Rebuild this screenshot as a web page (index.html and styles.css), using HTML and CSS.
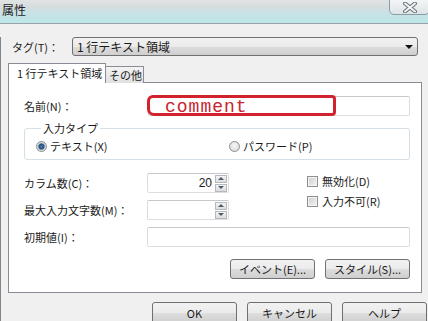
FILE: index.html
```html
<!DOCTYPE html>
<html>
<head>
<meta charset="utf-8">
<link rel="stylesheet" href="styles.css">
</head>
<body>
<div class="titlebar">
  <span class="title">属性</span>
  <span class="close">
    <svg width="16" height="11" viewBox="0 0 16 11">
      <path d="M3 1.5 L13 9.5 M13 1.5 L3 9.5" stroke="#6a7378" stroke-width="4" stroke-linecap="round"/>
      <path d="M3 1.5 L13 9.5 M13 1.5 L3 9.5" stroke="#f4f6f7" stroke-width="2" stroke-linecap="round"/>
    </svg>
  </span>
</div>
<div class="client">
  <div class="tag-row">
    <label class="tag-label">タグ(T)：</label>
    <div class="select"><span>1 行テキスト領域</span><span class="arrow"></span></div>
  </div>

  <div class="tabs">
    <div class="tab active">1 行テキスト領域</div>
    <div class="tab">その他</div>
  </div>

  <div class="panel">
    <div class="name-row">
      <label>名前(N)：</label>
      <div class="field"></div>
      <div class="scribble">comment</div>
    </div>

    <fieldset class="group">
      <legend>入力タイプ</legend>
      <div class="radios">
        <span class="option"><span class="radio checked"></span>テキスト(X)</span>
        <span class="option"><span class="radio"></span>パスワード(P)</span>
      </div>
    </fieldset>

    <div class="form-grid">
      <label class="lbl">カラム数(C)：</label>
      <div class="spin"><span class="value">20</span><span class="spin-btns"><span class="up"></span><span class="down"></span></span></div>
      <div class="checks">
        <span class="option"><span class="check"></span>無効化(D)</span>
        <span class="option"><span class="check"></span>入力不可(R)</span>
      </div>
      <label class="lbl">最大入力文字数(M)：</label>
      <div class="spin"><span class="value"></span><span class="spin-btns"><span class="up"></span><span class="down"></span></span></div>
      <label class="lbl">初期値(I)：</label>
      <div class="field wide"></div>
    </div>

    <div class="panel-buttons">
      <button class="btn">イベント(E)...</button>
      <button class="btn">スタイル(S)...</button>
    </div>
  </div>

  <div class="footer">
    <button class="btn">OK</button>
    <button class="btn">キャンセル</button>
    <button class="btn">ヘルプ</button>
  </div>
</div>
</body>
</html>
```

FILE: styles.css
```css
* {
  box-sizing: border-box;
}

body {
  margin: 0;
  width: 428px;
  height: 321px;
  overflow: hidden;
  background-color: #f0f0f0;
  font: 11px/14px "Noto Sans CJK JP", "Liberation Sans", sans-serif;
  color: #1a1a1a;
  white-space: nowrap;
}

.titlebar {
  height: 24px;
  display: flex;
  justify-content: space-between;
  align-items: flex-start;
  background: linear-gradient(to bottom, #e1e4e5 0%, #d6dcdd 30%, #c6e3e6 60%, #bfe6e9 100%);
  border-bottom: 1px solid #98a3a8;
}

.title {
  padding: 3px 0 0 2px;
  font-size: 12px;
  color: #222;
}

.close {
  width: 41px;
  height: 16px;
  margin: -1px -2px 0 0;
  display: flex;
  align-items: center;
  justify-content: center;
  border: 1px solid #8d9ba5;
  border-radius: 0 0 5px 5px;
  background: linear-gradient(to bottom, #f3f5f6, #dde4e7);
}

.client {
  border-left: 1px solid #7f868a;
  padding: 0 6px 0 7px;
}

.tag-row {
  display: flex;
  align-items: center;
  margin-top: 13px;
  padding: 0 4px;
}

.tag-label {
  width: 60px;
}

.select {
  flex: 1;
  height: 19px;
  display: flex;
  align-items: center;
  justify-content: space-between;
  padding-left: 4px;
  border: 1px solid #707070;
  border-radius: 3px;
  background: linear-gradient(to bottom, #f2f2f2 0%, #ebebeb 50%, #dddddd 51%, #cfcfcf 100%);
  font-size: 12px;
}

.arrow {
  margin-right: 4px;
  border-left: 4px solid transparent;
  border-right: 4px solid transparent;
  border-top: 4px solid #111;
}

.tabs {
  display: flex;
  align-items: flex-end;
  height: 20px;
  margin-top: 7px;
}

.tab {
  height: 17px;
  width: 38px;
  padding-left: 3px;
  border: 1px solid #898c95;
  border-left: none;
  border-bottom: none;
  background: linear-gradient(to bottom, #f3f3f3, #e0e0e0);
  line-height: 16px;
  overflow: hidden;
}

.tab.active {
  height: 20px;
  width: 98px;
  padding-left: 8px;
  border-left: 1px solid #898c95;
  background: white;
  position: relative;
  z-index: 1;
  line-height: 18px;
}

.panel {
  margin-top: -1px;
  height: 211px;
  border: 1px solid #898c95;
  background-color: white;
  padding: 13px 11px 0 15px;
}

.name-row {
  display: flex;
  align-items: center;
  position: relative;
}

.name-row label {
  width: 124px;
}

.field {
  flex: 1;
  height: 20px;
  border: 1px solid #dadde1;
  border-top-color: #c4c7cc;
  border-radius: 2px;
}

.scribble {
  position: absolute;
  left: 123px;
  top: -1px;
  width: 189px;
  height: 21px;
  border: 3px solid #d1222e;
  border-radius: 6px 4px 4px 7px;
  padding: 2px 0 0 15px;
  font: 18px/14px "Liberation Mono", monospace;
  letter-spacing: 1px;
  color: #c8242f;
}

.group {
  margin: 5px 0 0 0;
  padding: 4px 0 6px 11px;
  border: 1px solid #d5dfe5;
  border-radius: 3px;
}

.group legend {
  margin-left: 5px;
  padding: 0 2px;
}

.radios {
  display: grid;
  grid-template-columns: 193px 1fr;
}

.option {
  display: flex;
  align-items: center;
}

.radio {
  width: 11px;
  height: 11px;
  margin-right: 3px;
  border: 1px solid #8b8d8f;
  border-radius: 50%;
  background: radial-gradient(circle at 50% 40%, #f8f8f8, #d3d3d3);
}

.radio.checked {
  background: radial-gradient(circle, #4d84b5 0, #1f4c78 2.5px, #bcc7d0 3.5px, #eef1f3 5px);
}

.form-grid {
  display: grid;
  grid-template-columns: 123px 82px 78px 1fr;
  grid-template-rows: 20px 20px 20px;
  row-gap: 7px;
  margin-top: 13px;
  align-items: center;
}

.lbl {
  grid-column: 1;
}

.spin {
  grid-column: 2;
  height: 20px;
  display: flex;
  align-items: center;
  justify-content: flex-end;
  border: 1px solid #dadde1;
  border-top-color: #c4c7cc;
  border-radius: 2px;
  padding-right: 1px;
}

.spin .value {
  font-family: "Liberation Sans", sans-serif;
  font-size: 12px;
  margin-right: 3px;
}

.spin-btns {
  display: flex;
  flex-direction: column;
  gap: 1px;
}

.spin-btns span {
  width: 12px;
  height: 8px;
  display: flex;
  align-items: center;
  justify-content: center;
  border: 1px solid #b5b8bc;
  background: linear-gradient(to bottom, #f4f4f4, #dcdcdc);
}

.spin-btns span::after {
  content: "";
  border-left: 3px solid transparent;
  border-right: 3px solid transparent;
}

.spin-btns .up::after {
  border-bottom: 3px solid #4a5a6a;
}

.spin-btns .down::after {
  border-top: 3px solid #4a5a6a;
}

.checks {
  grid-column: 4;
  grid-row: 1 / span 2;
  align-self: start;
  display: flex;
  flex-direction: column;
  gap: 6px;
  padding-top: 1px;
}

.check {
  width: 11px;
  height: 11px;
  margin-right: 4px;
  border: 1px solid #8e8f8f;
  background: linear-gradient(135deg, #cfcfcf, #f3f3f3);
  box-shadow: inset 0 0 0 1px #f4f4f4;
}

.field.wide {
  grid-column: 2 / span 3;
}

.panel-buttons {
  display: flex;
  justify-content: flex-end;
  gap: 10px;
  margin-top: 12px;
}

.btn {
  width: 85px;
  height: 20px;
  padding: 0;
  border: 1px solid #707070;
  border-radius: 3px;
  background: linear-gradient(to bottom, #f2f2f2 0%, #ebebeb 50%, #dddddd 51%, #cfcfcf 100%);
  font: 11px/14px "Noto Sans CJK JP", "Liberation Sans", sans-serif;
  color: #1a1a1a;
}

.footer {
  display: flex;
  justify-content: flex-end;
  gap: 10px;
  margin: 9px -5px 0 0;
}

.footer .btn {
  height: 22px;
}
```
